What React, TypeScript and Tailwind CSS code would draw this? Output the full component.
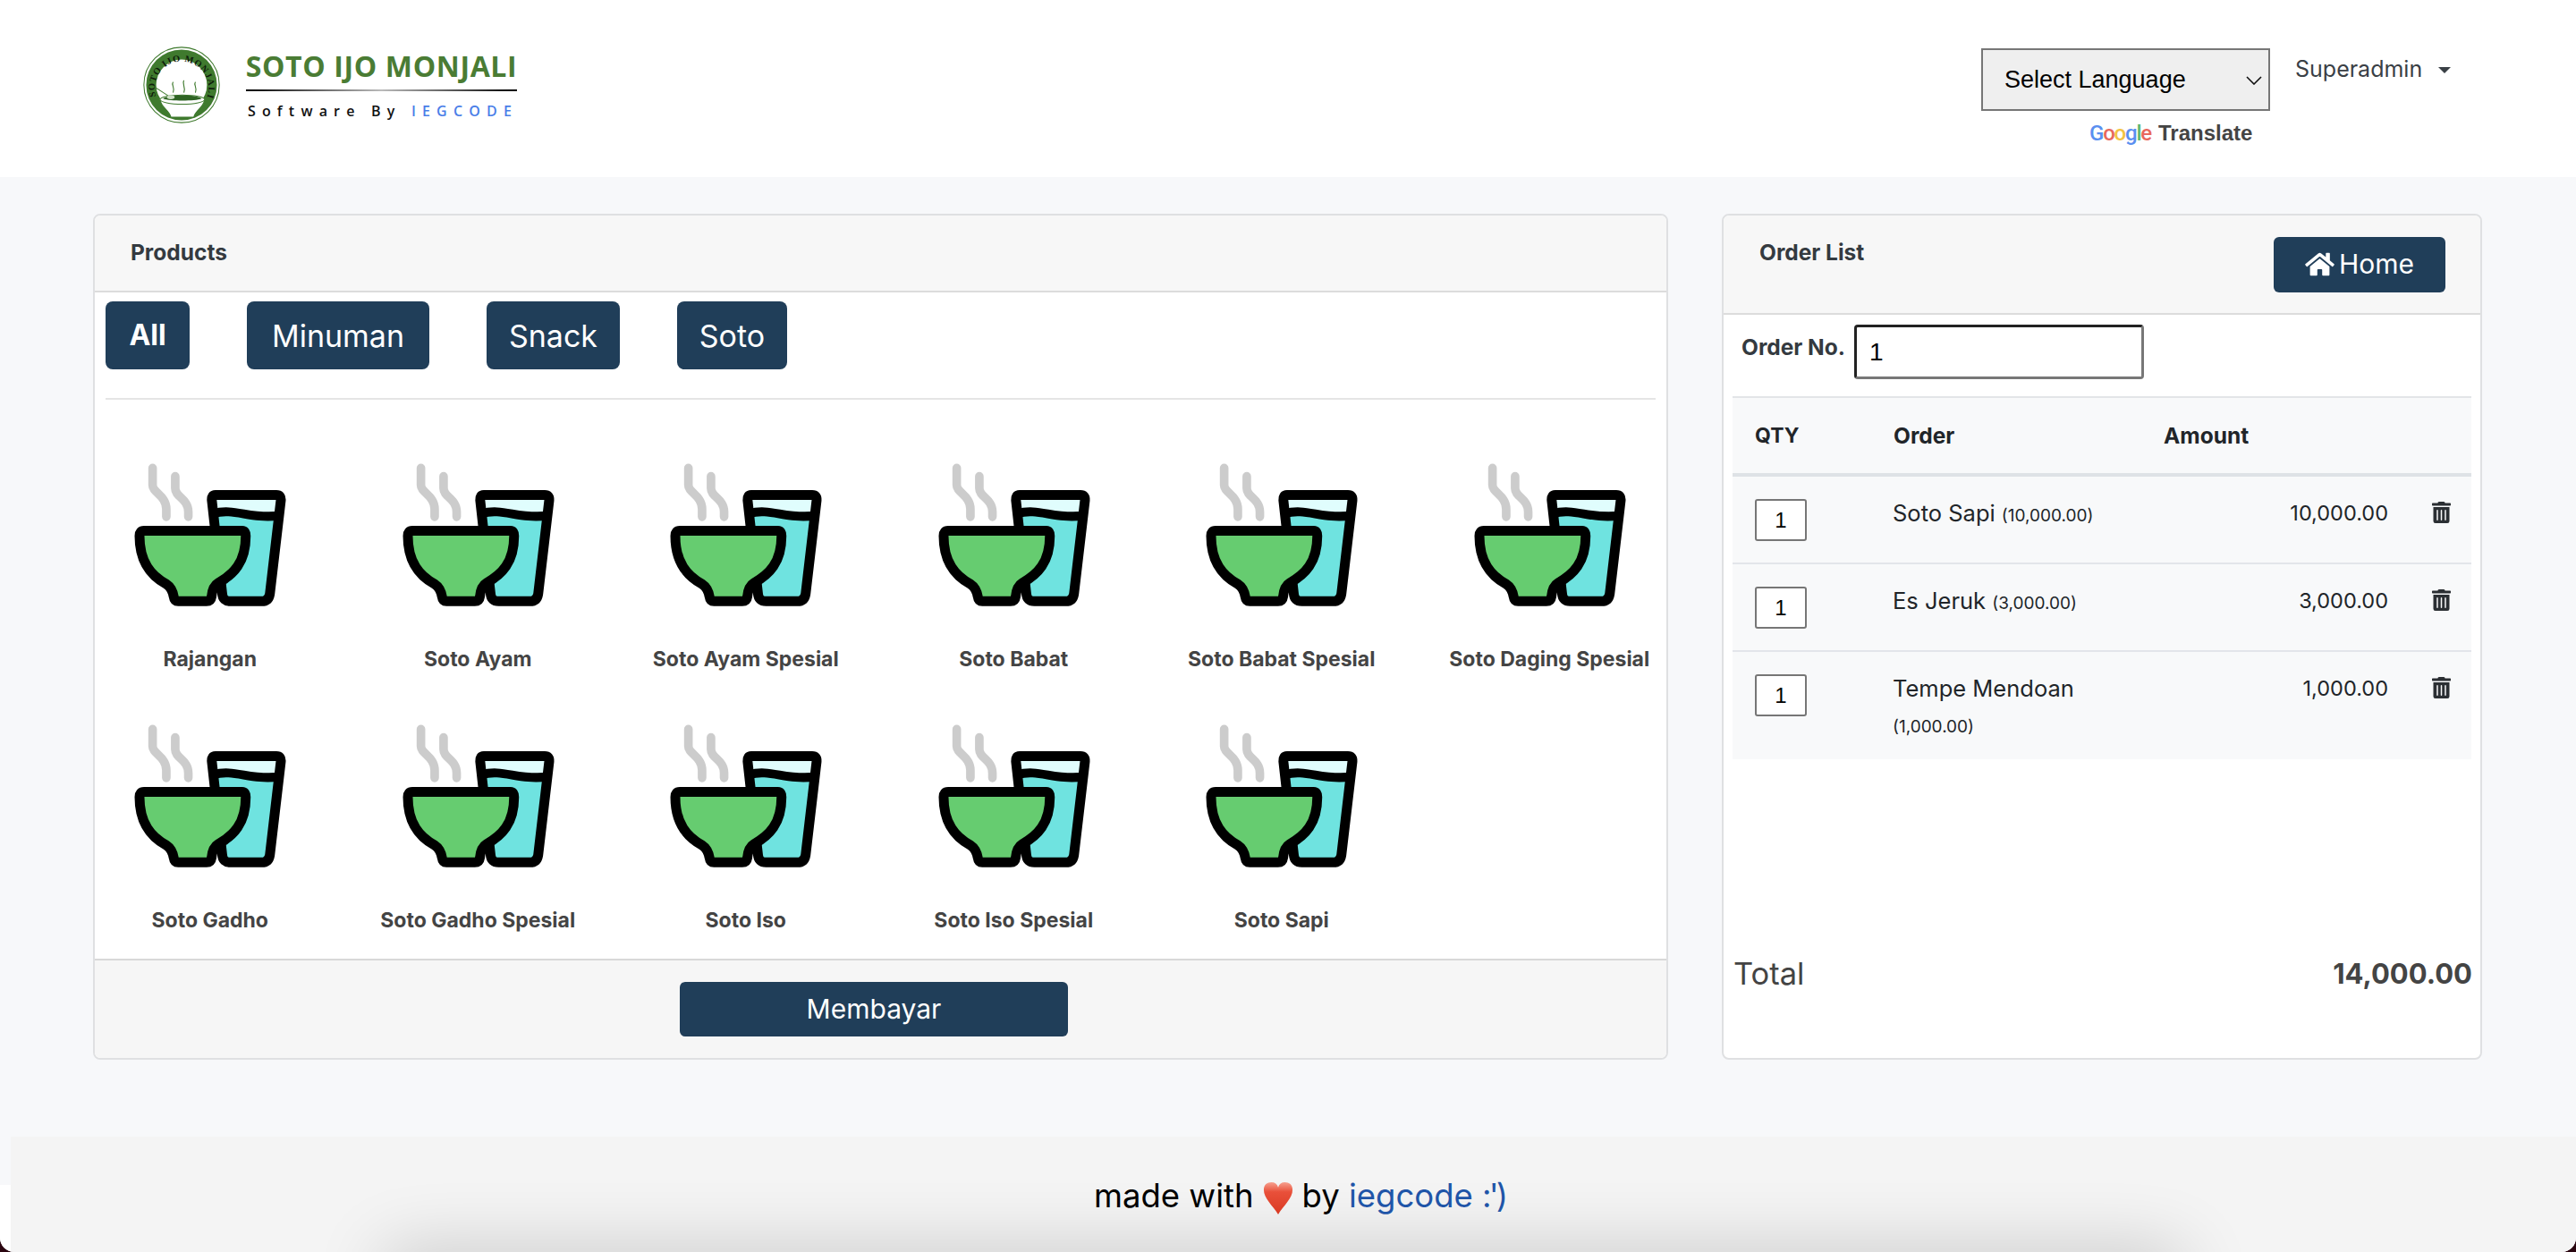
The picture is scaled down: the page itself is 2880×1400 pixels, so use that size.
import React from "react";

const NAVY = "bg-[#203e59]";
const products = [
  "Rajangan", "Soto Ayam", "Soto Ayam Spesial", "Soto Babat", "Soto Babat Spesial", "Soto Daging Spesial",
  "Soto Gadho", "Soto Gadho Spesial", "Soto Iso", "Soto Iso Spesial", "Soto Sapi",
];
const orders = [
  { name: "Soto Sapi", price: "(10,000.00)", amount: "10,000.00", h: "h-[98px]" },
  { name: "Es Jeruk", price: "(3,000.00)", amount: "3,000.00", h: "h-[98px]" },
  { name: "Tempe Mendoan", price: "(1,000.00)", amount: "1,000.00", h: "h-[120px]" },
];

function FoodIcon() {
  return (
    <svg viewBox="56 50 520 490" className="w-[173px] h-[163px]" fill="none">
      <path d="M124 72V130C124 155 170 165 170 210V236" stroke="#cccccc" strokeWidth="29" strokeLinecap="round" />
      <path d="M200 100V140C200 170 244 175 244 220V236" stroke="#cccccc" strokeWidth="29" strokeLinecap="round" />
      <path d="M335 163H540Q556 163 555 180L518 495Q514 520 490 520H385Q360 520 358 495L323 180Q322 163 335 163Z" fill="#e0fdfd" />
      <path d="M328 225C400 205 450 245 552 232L518 495Q514 520 490 520H385Q360 520 358 495Z" fill="#6fe3e0" />
      <path d="M328 225C400 205 450 245 552 232" stroke="#000" strokeWidth="30" />
      <path d="M335 163H540Q556 163 555 180L518 495Q514 520 490 520H385Q360 520 358 495L323 180Q322 163 335 163Z" stroke="#000" strokeWidth="33" strokeLinejoin="round" />
      <path d="M95 283H425Q437 283 437 300C437 390 395 430 345 458Q325 470 322 505Q320 520 305 520H210Q197 520 195 505Q190 475 170 462C120 435 80 390 80 300Q80 283 95 283Z" fill="#66cc70" stroke="#000" strokeWidth="33" strokeLinejoin="round" />
    </svg>
  );
}

function Logo() {
  return (
    <svg viewBox="0 0 100 100" className="w-[86px] h-[86px]">
      <defs>
        <path id="ring" d="M17 66A35 35 0 1 1 83 66" />
      </defs>
      <circle cx="50" cy="50" r="49" fill="#fff" stroke="#3f7a2e" strokeWidth="1.2" />
      <circle cx="50" cy="50" r="46" fill="#3f7a2e" />
      <circle cx="50" cy="50" r="33" fill="#fff" />
      <text fontSize="12" fontWeight="700" fill="#0e1c0a" fontFamily="'Liberation Serif',serif">
        <textPath href="#ring" startOffset="1%" textLength="132">SOTO IJO MONJALI</textPath>
      </text>
      <path d="M39 46c-3 4 3 7 0 14M53 44c-3 5 3 8 0 16M68 46c-3 4 3 7 0 14" fill="none" stroke="#3f7a2e" strokeWidth="1.3" />
      <path d="M17 54 34 65" stroke="#3f7a2e" strokeWidth="1.2" />
      <path d="M22 70C24 80 34 83 36 92H66C68 83 78 80 80 70Z" fill="#fff" stroke="#3f7a2e" strokeWidth="1.5" />
      <ellipse cx="51" cy="69" rx="29" ry="6" fill="#fff" stroke="#3f7a2e" strokeWidth="1.2" />
      <path d="M26 68C32 62 70 62 76 68C68 71 34 71 26 68Z" fill="#2f6424" />
      <ellipse cx="36" cy="66" rx="5" ry="2.5" fill="#cfe0c8" />
    </svg>
  );
}

function Trash() {
  return (
    <svg viewBox="0 0 448 512" className="w-[21px] h-[24px]" fill="#2b2f33">
      <path d="M32 464a48 48 0 0 0 48 48h288a48 48 0 0 0 48-48V128H32zm272-256a16 16 0 0 1 32 0v224a16 16 0 0 1-32 0zm-96 0a16 16 0 0 1 32 0v224a16 16 0 0 1-32 0zm-96 0a16 16 0 0 1 32 0v224a16 16 0 0 1-32 0zM432 32H312l-9.4-18.7A24 24 0 0 0 281.1 0H166.8a23.7 23.7 0 0 0-21.4 13.3L136 32H16A16 16 0 0 0 0 48v32a16 16 0 0 0 16 16h416a16 16 0 0 0 16-16V48a16 16 0 0 0-16-16z" />
    </svg>
  );
}

function HomeIcon() {
  return (
    <svg viewBox="0 0 576 512" className="w-[33px] h-[29px]" fill="#fff">
      <path d="M280.4 148.3 96 300.1V464a16 16 0 0 0 16 16l112.1-.3a16 16 0 0 0 15.9-16V368a16 16 0 0 1 16-16h64a16 16 0 0 1 16 16v95.6a16 16 0 0 0 16 16.1L464 480a16 16 0 0 0 16-16V300L295.7 148.3a12.2 12.2 0 0 0-15.3 0zM571.6 251.5 488 182.6V44.1a12 12 0 0 0-12-12h-56a12 12 0 0 0-12 12v72.6L318.5 43a48 48 0 0 0-61 0L4.3 251.5a12 12 0 0 0-1.6 16.9l25.5 31A12 12 0 0 0 45.2 301l235.2-193.7a12.2 12.2 0 0 1 15.3 0L530.9 301a12 12 0 0 0 16.9-1.6l25.5-31a12 12 0 0 0-1.7-16.9z" />
    </svg>
  );
}

function Heart() {
  return (
    <svg viewBox="0 0 36 40" className="w-[34px] h-[38px] inline-block align-[-9px] mx-[10px]">
      <defs>
        <linearGradient id="heartFill" x1="0" y1="0" x2="0" y2="1">
          <stop offset="0" stopColor="#f6a08e" />
          <stop offset="0.3" stopColor="#e9503a" />
          <stop offset="1" stopColor="#d93a22" />
        </linearGradient>
      </defs>
      <path d="M18 39C11 28 1 20 1 10C1 4 5 1 10 1C14 1 17 3 18 7C19 3 22 1 26 1C31 1 35 4 35 10C35 20 25 28 18 39Z" fill="url(#heartFill)" />
    </svg>
  );
}

export default function App() {
  return (
    <div className="w-[2880px] h-[1400px] bg-[#2a0610]">
      <div className="relative w-full h-full overflow-hidden rounded-b-[16px] flex flex-col bg-[#f7f8fa] font-['Inter',sans-serif] text-[#212529]">
        {/* header */}
        <header className="h-[198px] shrink-0 bg-white flex justify-between pl-[160px] pr-[140px]">
          <div className="flex items-start pt-[52px] gap-[29px]">
            <Logo />
            <div className="w-[303px] flex flex-col items-center font-['Open_Sans',sans-serif]">
              <div className="h-[44px] text-[32px] leading-[44px] font-bold tracking-[0.02em] text-[#4a7c34] whitespace-nowrap">SOTO IJO MONJALI</div>
              <div className="h-[2px] mt-[4px] w-full bg-[linear-gradient(90deg,#000,#bbb_50%,#000)]" />
              <div className="mt-[11px] ml-[3px] text-[16px] leading-[22px] font-semibold tracking-[0.45em] whitespace-nowrap text-[#111]">
                Software By <span className="text-[#4a7ee8]">IEGCODE</span>
              </div>
            </div>
          </div>
          <div className="flex items-start pt-[54px]">
            <div className="flex flex-col items-start">
              <div className="relative w-[323px] h-[70px] flex items-center pl-[24px] border-2 border-[#767676] bg-[#efefef] text-black font-['Liberation_Sans',sans-serif] text-[27px]">
                Select Language
                <svg viewBox="0 0 18 10" className="absolute right-[7px] top-[29px] w-[18px] h-[10px]" fill="none" stroke="#111" strokeWidth="1.6">
                  <path d="M1 1l8 8 8-8" />
                </svg>
              </div>
              <div className="ml-[121px] mt-[7px] flex items-baseline gap-[8px] leading-[36px] font-['Liberation_Sans',sans-serif]">
                <span className="text-[24px] font-['Roboto',sans-serif] font-medium tracking-[-0.05em] whitespace-nowrap">
                  <span className="text-[#5a8ff0]">G</span>
                  <span className="text-[#e8685c]">o</span>
                  <span className="text-[#f3c344]">o</span>
                  <span className="text-[#5a8ff0]">g</span>
                  <span className="text-[#5cb870]">l</span>
                  <span className="text-[#e8685c]">e</span>
                </span>
                <span className="font-bold text-[24px] text-[#444]">Translate</span>
              </div>
            </div>
            <div className="ml-[28px] mt-[1px] flex items-center gap-[13px] h-[46px] text-[25px] text-[#3a4046]">
              <span className="w-[147px] whitespace-nowrap">Superadmin</span>
              <span className="w-0 h-0 border-x-[7px] border-x-transparent border-t-[7px] border-t-[#3a4046]" />
            </div>
          </div>
        </header>

        {/* main */}
        <main className="flex gap-[60px] pl-[104px] pt-[41px]">
          <section className="w-[1761px] h-[946px] flex flex-col border-2 border-[#dfe0e2] rounded-[8px] bg-white overflow-hidden">
            <div className="h-[86px] shrink-0 pl-[40px] pt-[25px] bg-[#f7f7f7] border-b-2 border-[#dcdcdc] text-[24.5px] leading-[32px] font-bold text-[#343a40]">Products</div>
            <div className="mx-[12px] flex gap-[64px] pt-[10px] pb-[32px] border-b-2 border-[#e5e5e5]">
              <button className={`w-[94px] h-[76px] rounded-[8px] ${NAVY} text-white text-[32px] font-bold`}>All</button>
              <button className={`w-[204px] h-[76px] rounded-[8px] ${NAVY} text-white text-[34px]`}>Minuman</button>
              <button className={`w-[149px] h-[76px] rounded-[8px] ${NAVY} text-white text-[34px]`}>Snack</button>
              <button className={`w-[123px] h-[76px] rounded-[8px] ${NAVY} text-white text-[34px]`}>Soto</button>
            </div>
            <div className="flex-1 min-h-0 -ml-[21px] w-[1797px] pt-[69px] grid grid-cols-6 gap-y-[56px] content-start">
              {products.map((p) => (
                <div key={p} className="h-[236px] flex flex-col items-center">
                  <FoodIcon />
                  <div className="mt-[43px] text-[23px] leading-[30px] font-bold text-[#444] whitespace-nowrap">{p}</div>
                </div>
              ))}
            </div>
            <div className="h-[111px] shrink-0 flex justify-center pt-[24px] pr-[15px] bg-[#f6f6f6] border-t-2 border-[#d8d8d8]">
              <button className={`w-[434px] h-[61px] rounded-[6px] ${NAVY} text-white text-[30px]`}>Membayar</button>
            </div>
          </section>

          <section className="w-[850px] h-[946px] flex flex-col border-2 border-[#dfe0e2] rounded-[8px] bg-white overflow-hidden">
            <div className="h-[111px] shrink-0 flex justify-between items-start pl-[40px] pr-[39px] pt-[24px] bg-[#f7f7f7] border-b-2 border-[#dcdcdc]">
              <div className="pt-[1px] text-[24.5px] leading-[32px] font-bold text-[#343a40]">Order List</div>
              <button className={`w-[192px] h-[62px] flex items-center justify-center gap-[5px] pb-[2px] rounded-[6px] ${NAVY} text-white text-[30px]`}>
                <HomeIcon />
                Home
              </button>
            </div>
            <div className="h-[91px] shrink-0 flex items-start pl-[20px] pt-[11px]">
              <span className="w-[126px] h-[50px] text-[24.5px] leading-[50px] font-bold text-[#343a40] whitespace-nowrap">Order No.</span>
              <div className="w-[324px] h-[61px] flex items-center pl-[14px] rounded-[4px] border-[3px] border-t-[#222] border-l-[#222] border-b-[#777] border-r-[#777] text-[28px] text-black font-['Liberation_Sans',sans-serif]">1</div>
            </div>
            <div className="mx-[10px] bg-[#f8f9fa]">
              <div className="h-[90px] flex items-center border-t-2 border-b-[4px] border-t-[#e3e5e8] border-b-[#dee2e6] text-[24.5px] font-bold text-[#212529]">
                <span className="ml-[25px] w-[155px] text-[23px]">QTY</span>
                <span className="w-[302px]">Order</span>
                <span>Amount</span>
              </div>
              {orders.map((o, i) => (
                <div key={o.name} className={`${o.h} flex items-start pt-[25px] ${i < 2 ? "border-b-2 border-[#e3e5ea]" : ""}`}>
                  <div className="ml-[25px] w-[58px] h-[47px] flex items-center justify-center rounded-[3px] border-2 border-[#767676] bg-white text-[24px] text-black font-['Liberation_Sans',sans-serif]">1</div>
                  <div className="ml-[96px] w-[261px] -mt-[4px] text-[25.5px] leading-[40px] text-[#212529]">
                    {o.name} <span className="text-[19px]">{o.price}</span>
                  </div>
                  <div className="w-[293px] -mt-[4px] text-right text-[23.5px] leading-[40px] text-[#212529]">{o.amount}</div>
                  <div className="ml-[49px] pt-[3px]"><Trash /></div>
                </div>
              ))}
            </div>
            <div className="mt-[217px] ml-[11px] mr-[9px] flex justify-between items-center text-[#444] text-[34.5px] leading-[46px]">
              <span>Total</span>
              <span className="font-bold text-[31px]">14,000.00</span>
            </div>
          </section>
        </main>

        {/* footer */}
        <footer className="relative mt-auto ml-[12px] h-[129px] shrink-0 flex justify-center pt-[43px] pl-[14px] bg-[#f4f4f4] text-[36.5px] leading-[46px] text-black overflow-hidden">
          <div className="absolute left-[418px] right-[440px] -bottom-[60px] h-[60px] shadow-[0_0_80px_0_rgba(0,0,0,0.2)]" />
          <p className="relative whitespace-nowrap">
            made with<Heart />by <a className="text-[#1f55a8]">iegcode <span className="tracking-[-0.08em]">:')</span></a>
          </p>
        </footer>
        <div className="absolute left-0 bottom-0 w-[12px] h-[75px] bg-white" />
      </div>
    </div>
  );
}
